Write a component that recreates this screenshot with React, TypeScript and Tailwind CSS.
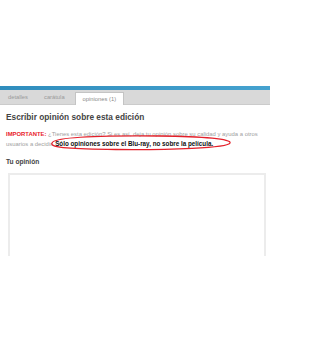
import React from 'react';

const tabs = ['detalles', 'carátula', 'opiniones (1)'];

function TabBar() {
  return (
    <div>
      <div className="h-[4px] bg-gradient-to-r from-[#2f8dbd] to-[#45a2cf]" />
      <div className="flex h-[15px] items-end gap-[4px] border-b border-[#cbcbcb] bg-[#d9d9d9] pl-[2px]">
        {tabs.map((t, i) =>
          i === 2 ? (
            <div
              key={t}
              className="-mb-px flex h-[13px] items-center border border-b-0 border-[#c4c4c4] bg-white px-[7px] text-[5.8px] text-[#8a8a8a]"
            >
              {t}
            </div>
          ) : (
            <div key={t} className="flex h-[13px] items-center px-[6px] text-[5.8px] text-[#9a9a9a]">
              {t}
            </div>
          )
        )}
      </div>
    </div>
  );
}

function Notice() {
  return (
    <div className="relative mt-[7px] text-[5.9px] leading-[9px] text-[#a0a0a0]">
      <span className="font-bold text-[#e8202a]">IMPORTANTE:</span> ¿Tienes esta edición? Si es así, deja tu
      opinión sobre su calidad y ayuda a otros usuarios a decidir.{' '}
      <span className="text-[6.3px] font-bold text-[#111]">Sólo opiniones sobre el Blu-ray, no sobre la película.</span>
      <svg
        className="pointer-events-none absolute left-[38px] top-[4px]"
        width="190"
        height="17"
        viewBox="0 0 190 17"
        fill="none"
      >
        <path
          d="M8 9 C 10 3, 60 1.5, 115 2 C 160 2.5, 188 5, 186 9 C 184 14, 125 16, 72 15.5 C 30 15, 5 14, 8 9 Z"
          stroke="#e3202a"
          strokeWidth="1.3"
        />
      </svg>
    </div>
  );
}

export default function App() {
  return (
    <div className="h-[340px] w-[270px] overflow-hidden bg-white font-['Liberation_Sans',Arial,sans-serif]">
      <div className="h-[86px]" />
      <TabBar />
      <div className="px-[6px] pt-[6px]">
        <h2 className="text-[8.3px] font-bold text-[#444]">Escribir opinión sobre esta edición</h2>
        <Notice />
        <h3 className="mt-[8px] text-[6.6px] font-bold text-[#444]">Tu opinión</h3>
        <div className="ml-[2px] mr-[-2px] mt-[6px] h-[83px] border-[2px] border-b-0 border-[#ececec]" />
      </div>
    </div>
  );
}
